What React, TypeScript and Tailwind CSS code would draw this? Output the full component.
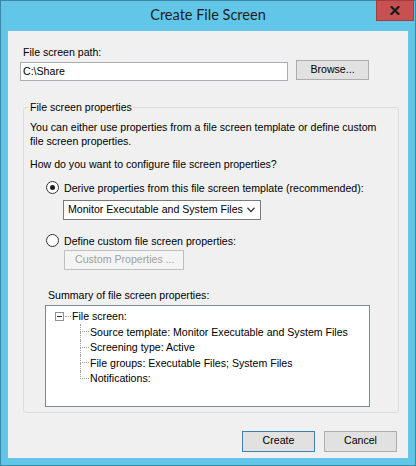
import React from "react";

function Radio({ checked }: { checked: boolean }) {
  return (
    <div className="w-[13px] h-[13px] rounded-full border border-[#333333] bg-white flex items-center justify-center shrink-0">
      {checked && <div className="w-[5px] h-[5px] rounded-full bg-[#1a1a1a]" />}
    </div>
  );
}

function Btn({ children, def }: { children: React.ReactNode; def?: boolean }) {
  return (
    <div
      className={
        "w-[73px] h-[21px] flex items-center justify-center bg-[#e1e1e1] border " +
        (def ? "border-[#3c7fb1]" : "border-[#adadad]")
      }
    >
      {children}
    </div>
  );
}

function Child({ text, last }: { text: string; last?: boolean }) {
  return (
    <div className="flex h-[15.5px] items-stretch">
      <div className="w-[25px] shrink-0" />
      <div className="w-[9px] shrink-0 flex flex-col">
        <div className="h-1/2 border-l border-b border-dotted border-[#a0a0a0]" />
        <div className={"h-1/2 " + (last ? "" : "border-l border-dotted border-[#a0a0a0]")} />
      </div>
      <div className="flex items-center pl-[1px] leading-[13px]">{text}</div>
    </div>
  );
}

export default function App() {
  return (
    <div className="w-[416px] h-[466px] bg-[#62c6e8] border border-[#3d86a6] flex flex-col text-black font-['Liberation_Sans',Arial,sans-serif] text-[10.6px]">
      {/* Title bar */}
      <div className="h-[30px] grid grid-cols-[1fr_auto_1fr] items-start shrink-0">
        <div />
        <div className="pt-[5px] text-[14.5px] leading-[18px] text-[#1e1e1e] font-['Lato','Open_Sans',sans-serif]">
          Create File Screen
        </div>
        <div className="flex justify-end pr-[1px]">
          <div className="w-[38px] h-[21px] -mt-[1px] bg-[#c75050] border border-[#a53c3c] flex items-center justify-center">
            <svg width="10" height="9" viewBox="0 0 10 9">
              <path d="M1.5 1 L8.5 8 M8.5 1 L1.5 8" stroke="#1b1b1b" strokeWidth="2.2" strokeLinecap="square" />
            </svg>
          </div>
        </div>
      </div>

      {/* Client */}
      <div className="mx-[7px] flex-1 bg-[#f0f0f0] flex flex-col">
        <div className="pt-[15px] pl-[15px] leading-[13px]">File screen path:</div>
        <div className="flex items-start mt-[1px] pl-[12px]">
          <div className="mt-[2px] w-[268px] h-[19px] bg-white border border-[#abadb3] flex items-center pl-[2px] leading-[13px]">
            C:\Share
          </div>
          <div className="ml-[8px] w-[73px] h-[20px] bg-[#e1e1e1] border border-[#adadad] flex items-center justify-center">
            Browse...
          </div>
        </div>

        <fieldset className="mt-[20px] ml-[15px] w-[376px] border border-[#dcdcdc] rounded-[3px] pl-[6px] pr-[6px] pb-[5px]">
          <legend className="leading-[13px] px-[1px] -ml-[1px]">File screen properties</legend>
          <div className="mt-[6px] leading-[14.4px]">
            You can either use properties from a file screen template or define custom
            <br />
            file screen properties.
          </div>
          <div className="mt-[9px] leading-[13px]">How do you want to configure file screen properties?</div>

          <div className="mt-[10px] ml-[16px] flex items-center h-[13px]">
            <Radio checked />
            <div className="ml-[5px] leading-[13px] pt-[2px]">Derive properties from this file screen template (recommended):</div>
          </div>
          <div className="mt-[6px] ml-[33px] w-[198px] h-[20px] bg-white border border-[#7a7a7a] flex items-center justify-between pl-[4px] pr-[5px]">
            <span className="leading-[13px]">Monitor Executable and System Files</span>
            <svg width="8" height="6" viewBox="0 0 8 6">
              <path d="M0.5 0.8 L4 4.6 L7.5 0.8" fill="none" stroke="#333" strokeWidth="1.3" />
            </svg>
          </div>

          <div className="mt-[14px] ml-[16px] flex items-center h-[13px]">
            <Radio checked={false} />
            <div className="ml-[5px] leading-[13px] pt-[2px]">Define custom file screen properties:</div>
          </div>
          <div className="mt-[3px] ml-[34px] w-[120px] h-[20px] bg-[#f4f4f4] border border-[#bfbfbf] flex items-center pl-[10px] text-[#a0a0a0] leading-[13px]">
            Custom Properties ...
          </div>

          <div className="mt-[19px] ml-[18px] leading-[13px]">Summary of file screen properties:</div>
          <div className="mt-[3px] ml-[15px] w-[325px] h-[102px] bg-white border border-[#828790] pt-[3px] pl-[9px] flex flex-col">
            <div className="flex h-[15.5px] items-center">
              <div className="w-[9px] h-[9px] border border-[#919191] flex items-center justify-center shrink-0">
                <div className="w-[5px] h-[1px] bg-[#333]" />
              </div>
              <div className="w-[6px] border-b border-dotted border-[#a0a0a0] ml-[1px]" />
              <div className="ml-[1px] leading-[13px]">File screen:</div>
            </div>
            <Child text="Source template: Monitor Executable and System Files" />
            <Child text="Screening type: Active" />
            <Child text="File groups: Executable Files; System Files" />
            <Child text="Notifications:" last />
          </div>
        </fieldset>

        <div className="mt-[18px] flex justify-end gap-[9px] pr-[11px]">
          <Btn def>Create</Btn>
          <Btn>Cancel</Btn>
        </div>
      </div>
      <div className="h-[7px] shrink-0" />
    </div>
  );
}
